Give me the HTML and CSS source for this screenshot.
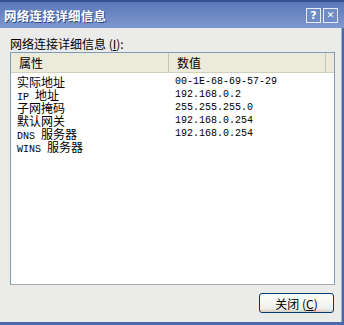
FILE: index.html
```html
<!DOCTYPE html>
<html>
<head>
<meta charset="utf-8">
<link rel="stylesheet" href="styles.css">
</head>
<body>
<div class="win">
  <div class="titlebar">
    <span class="title">网络连接详细信息</span>
    <div class="tbtns">
      <span class="tbtn">?</span>
      <span class="tbtn x">&#x2715;</span>
    </div>
  </div>
  <div class="frame">
    <div class="client">
      <div class="label">网络连接详细信息 (<u>I</u>):</div>
      <div class="list">
        <div class="head">
          <div class="hcell c1">属性</div>
          <div class="hcell c2">数值</div>
          <div class="hcell c3"></div>
        </div>
        <div class="rows">
          <div class="row"><span class="k">实际地址</span><span class="v m">00-1E-68-69-57-29</span></div>
          <div class="row"><span class="k"><span class="m">IP </span>地址</span><span class="v m">192.168.0.2</span></div>
          <div class="row"><span class="k">子网掩码</span><span class="v m">255.255.255.0</span></div>
          <div class="row"><span class="k">默认网关</span><span class="v m">192.168.0.254</span></div>
          <div class="row"><span class="k"><span class="m">DNS </span>服务器</span><span class="v m">192.168.0.254</span></div>
          <div class="row"><span class="k"><span class="m">WINS </span>服务器</span><span class="v"></span></div>
        </div>
      </div>
      <div class="foot">
        <button class="btn">关闭 (<u>C</u>)</button>
      </div>
    </div>
  </div>
</div>
</body>
</html>
```
FILE: styles.css
```css
html, body { margin: 0; padding: 0; }
body {
  width: 344px; height: 325px; overflow: hidden;
  font-family: "Noto Sans CJK SC", sans-serif;
  font-size: 12px;
  color: #000;
  background: #ebebea;
}
.win {
  height: 325px;
  display: flex; flex-direction: column;
  background: #4a69a8;
}
.titlebar {
  height: 26px;
  border-top: 2px solid #34508f;
  background: linear-gradient(#5a77b7, #7f99cf);
  display: flex; align-items: center; justify-content: space-between;
  padding: 0 6px 0 4px;
}
.title {
  color: #fff; font-weight: bold; font-size: 12.5px; letter-spacing: 0.3px;
  text-shadow: 1px 1px 0 #2f4a85;
}
.tbtns { display: flex; gap: 2px; }
.tbtn {
  width: 15px; height: 15px;
  border: 1px solid #e6ecf7;
  box-sizing: border-box;
  background: #6f8cc6;
  color: #fff; font-family: "DejaVu Sans", sans-serif;
  font-size: 11px; font-weight: bold;
  display: flex; align-items: center; justify-content: center;
  line-height: 1;
}
.tbtn.x { font-size: 9px; }
.frame {
  flex: 1;
  display: flex;
  padding: 0 4px 3px 0;
  background: #4a69a8;
}
.client {
  flex: 1;
  background: #ebebea;
  border-right: 1px solid #a9b3c8;
  display: flex; flex-direction: column;
  padding: 9px 6px 0 10px;
}
.label { height: 14px; line-height: 14px; margin-bottom: 1px; }
.list {
  height: 233px;
  box-sizing: border-box;
  background: #fff;
  border: 1px solid #7f9db9;
  border-bottom-color: #a6a6a6;
  display: flex; flex-direction: column;
}
.head {
  display: flex; height: 19px;
  background: #ebeadb;
  border-bottom: 1px solid #d0d0bf;
}
.hcell {
  line-height: 19px; padding-left: 8px;
  border-right: 1px solid #c7c5b2;
  box-sizing: border-box;
}
.c1 { width: 158px; }
.c2 { width: 157px; }
.c3 { flex: 1; border-right: none; }
.rows { padding-top: 2px; }
.row { display: flex; height: 13px; line-height: 13px; font-size: 12px; }
.k { width: 158px; padding-left: 6px; box-sizing: border-box; }
.v { padding-left: 6px; }
.m { font-family: "Liberation Mono", monospace; font-size: 10px; }
.foot {
  flex: 1;
  display: flex; justify-content: flex-end; align-items: flex-start;
  padding: 8px 0 0 0;
}
.btn {
  width: 75px; height: 20px;
  margin-right: 1px;
  border: 1px solid #003c74;
  border-radius: 3px;
  background: linear-gradient(#ffffff, #f0f0ea 80%, #d6d0c5);
  font-family: "Noto Sans CJK SC", sans-serif;
  font-size: 12px; padding: 0;
  line-height: 17px;
}
```
